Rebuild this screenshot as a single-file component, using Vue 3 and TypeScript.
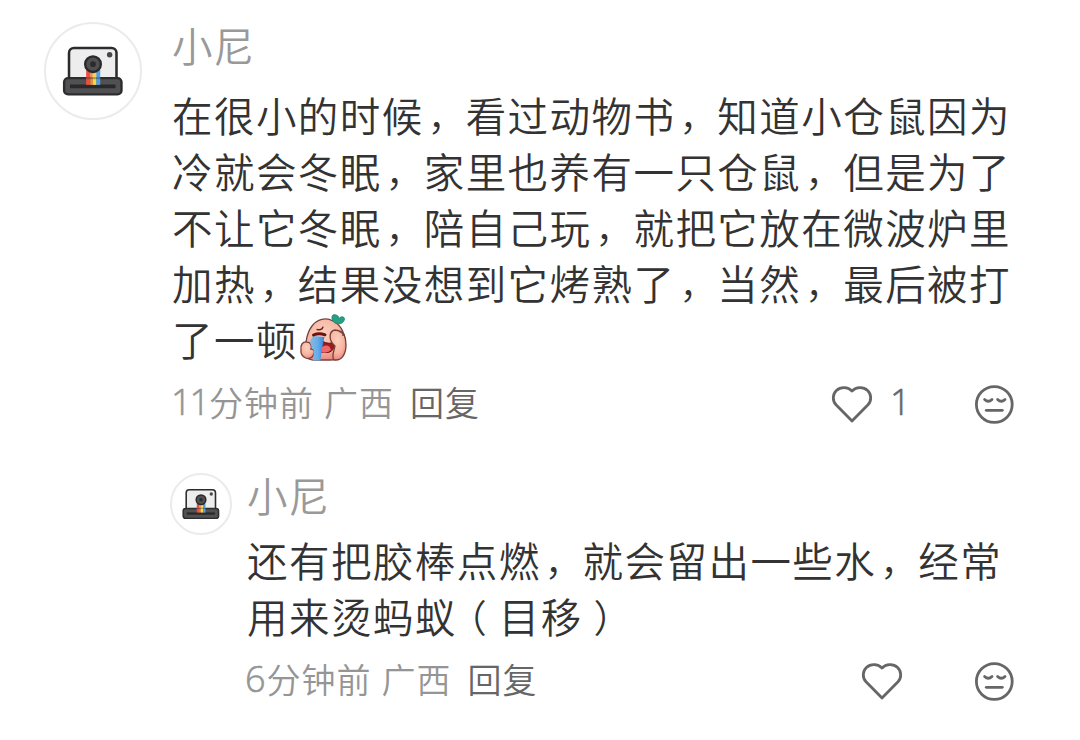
<script setup lang="ts">
interface Comment {
  id: number
  name: string
  lines: string[]
  elapsed: number
  region: string
  likes: number
  crying: boolean
  reply: boolean
}

const comments: Comment[] = [
  {
    id: 1,
    name: '小尼',
    lines: [
      '在很小的时候，看过动物书，知道小仓鼠因为',
      '冷就会冬眠，家里也养有一只仓鼠，但是为了',
      '不让它冬眠，陪自己玩，就把它放在微波炉里',
      '加热，结果没想到它烤熟了，当然，最后被打',
      '了一顿',
    ],
    elapsed: 11,
    region: '广西',
    likes: 1,
    crying: true,
    reply: false,
  },
  {
    id: 2,
    name: '小尼',
    lines: ['还有把胶棒点燃，就会留出一些水，经常', '用来烫蚂蚁（目移）'],
    elapsed: 6,
    region: '广西',
    likes: 0,
    crying: false,
    reply: true,
  },
]

// Punctuation is split out so that it can be placed optically within its cell.
const segments = (line: string): string[] => line.split(/([，（）])/).filter(Boolean)
const kind = (s: string): string => (({ '，': 'comma', '（': 'open', '）': 'close' }) as Record<string, string>)[s] ?? ''
</script>

<template>
  <main class="thread">
    <article v-for="c in comments" :key="c.id" class="comment" :class="{ reply: c.reply }">
      <div class="avatar">
        <svg viewBox="0 0 96 96">
          <rect x="23.500" y="24.500" width="48.500" height="35" rx="5" fill="#ededed" stroke="#2c2c2e" stroke-width="2.600" />
          <rect x="18.500" y="55.300" width="58.600" height="16.500" rx="4" fill="#515153" stroke="#2c2c2e" stroke-width="2.400" />
          <path d="M24.500 63.800H71" stroke="#29292b" stroke-width="3.800" />
          <path d="M43.200 47V62.200" stroke="#e9503f" stroke-width="4.400" />
          <path d="M46.500 47V62.200" stroke="#f08a3c" stroke-width="2.500" />
          <path d="M49.700 47V62.200" stroke="#f8d44b" stroke-width="4" />
          <path d="M53.400 47V62.200" stroke="#4f9fe2" stroke-width="4" />
          <path d="M41 55.300H56" stroke="#2c2c2e" stroke-opacity=".35" stroke-width="2" />
          <circle cx="48" cy="41" r="8" fill="#505052" stroke="#29292b" stroke-width="2.400" />
          <circle cx="48" cy="41" r="2.900" fill="#2b2b2d" />
          <circle cx="65" cy="31.500" r="2.800" fill="#47474a" />
        </svg>
      </div>
      <div class="content">
        <div class="name">{{ c.name }}</div>
        <div class="text">
          <div v-for="(line, i) in c.lines" :key="i" class="line">
            <span v-for="(s, j) in segments(line)" :key="j" :class="kind(s)">{{ s }}</span>
            <svg v-if="c.crying && i === c.lines.length - 1" class="emoji" viewBox="0 0 50 48">
              <defs>
                <radialGradient id="skin" cx=".45" cy=".35" r=".7">
                  <stop offset="0" stop-color="#fbd0bb" />
                  <stop offset=".6" stop-color="#f7b5a3" />
                  <stop offset="1" stop-color="#ea7f77" />
                </radialGradient>
                <linearGradient id="tears" x2="1">
                  <stop offset="0" stop-color="#91b9dd" />
                  <stop offset=".55" stop-color="#63aeea" />
                  <stop offset="1" stop-color="#3981db" />
                </linearGradient>
              </defs>
              <path d="M8 43C5 34 7 20 13 12C18 5 27 3 34 7C43 11 47 22 46 33C45 42 39 46 31 46H14Q10 46 8 43Z" fill="url(#skin)" stroke="#74423c" stroke-width="1.300" />
              <path d="M36 9C33 7 32 3 34 1C37 0 40 2 40 4.500C42 2 45.500 2.500 45.500 5C45 9 41 11 36 9Z" fill="#26a083" stroke="#168268" stroke-width=".8" />
              <path d="M18 15.500Q23 16.500 24 13" fill="none" stroke="#6b241f" stroke-width="1.300" stroke-linecap="round" />
              <path d="M23 27Q30 31 35 28C36 37 31 40 22 38Z" fill="#9a1b1b" stroke="#64130f" />
              <path d="M23 33Q30 29 32 36Q28 40 22 38Z" fill="#ef6769" />
              <path d="M2 36C1 31 4 27 8 28C12 28 13 32 12 35C16 35 17 39 13 43C8 47 1 42 2 36Z" fill="url(#skin)" stroke="#74423c" stroke-width="1.300" />
              <path d="M14 22L25.500 23C23.500 31 22.500 38 21.500 46.500H13.500C14 43 15 41 15 38C15 35 13 35 12.500 34C13 31 11 29 10.500 28Z" fill="url(#tears)" />
              <path d="M14.500 21Q20 18.500 26 20.800" fill="none" stroke="#70100f" stroke-width="3" stroke-linecap="round" />
              <path d="M35 46C32 42 35 38 36 32C29 26 30 17 36 16C42 15 47 22 47 31C47 40 43 46 37 46Z" fill="url(#skin)" />
              <path d="M35 46C32 42 35 38 36 32C29 26 30 17 36 16C39 16 41 17 43 19M45 20Q47 25 47 31C47 40 43 46 37 46H35M41 17Q44 18 44 22" fill="none" stroke="#74423c" stroke-width="1.300" />
            </svg>
          </div>
        </div>
        <div class="meta">
          <span class="digits">{{ c.elapsed }}</span>
          <span class="time">分钟前</span>
          <span class="region">{{ c.region }}</span>
          <span class="answer">回复</span>
          <div class="actions">
            <svg class="heart" viewBox="0 0 44 40">
              <path d="M22 37L6 20.800C2.200 16.700 2.500 10.200 6.400 6.500C10.900 2.300 17.800 2.700 22 7.100C26.200 2.700 33.100 2.300 37.600 6.500C41.500 10.200 41.800 16.700 38 20.800Z" />
            </svg>
            <span v-if="c.likes" class="count">{{ c.likes }}</span>
            <svg class="face" viewBox="0 0 40 40">
              <circle cx="20.300" cy="20.500" r="17.900" />
              <path d="M10.600 15.500Q14.300 19 18 15.500M23.600 15.500Q27.300 19 31 15.500" />
              <path d="M12.300 26.300H28.300" />
            </svg>
          </div>
        </div>
      </div>
    </article>
  </main>
</template>

<style>
body {
  margin: 0;
  background: #fff;
}
</style>

<style scoped>
.thread {
  box-sizing: border-box;
  width: 1080px;
  height: 740px;
  padding: 22px 66px 0 44px;
  overflow: hidden;
  background: #fff;
  font-family: "Noto Sans CJK SC", sans-serif;
}
.comment {
  display: flex;
  gap: 30px;
}
.avatar {
  box-sizing: border-box;
  flex: none;
  width: 98px;
  height: 98px;
  border: 2px solid #ebebeb;
  border-radius: 50%;
}
.avatar svg {
  display: block;
  width: 100%;
  height: 100%;
}
.content {
  flex: 1;
  min-width: 0;
}
.name {
  height: 46px;
  margin-bottom: 19px;
  color: #999;
  font-size: 40.500px;
  font-weight: 350;
  line-height: 46px;
  letter-spacing: 1px;
}
.line {
  display: flex;
  height: 56px;
  color: #333;
  font-size: 40.500px;
  font-weight: 350;
  line-height: 56px;
  letter-spacing: 1.450px;
  white-space: nowrap;
}
.comma {
  box-sizing: border-box;
  width: 41.950px;
  padding-left: 4px;
  font-size: 37px;
}
.open,
.close {
  box-sizing: border-box;
  width: 41.950px;
  padding-left: 11px;
  font-size: 38px;
  font-feature-settings: "halt";
}
.emoji {
  width: 50px;
  height: 48px;
  margin: 3px 0 0 1px;
}
.meta {
  display: flex;
  align-items: center;
  height: 40px;
  margin-top: 15px;
  color: #959595;
  font-size: 34px;
  font-weight: 350;
  line-height: 40px;
  letter-spacing: 1px;
  white-space: nowrap;
}
.digits,
.count {
  font-family: "Open Sans", sans-serif;
  font-size: 36px;
  font-weight: 300;
  -webkit-text-stroke: 0.600px currentColor;
}
.digits {
  margin-left: -1px;
  letter-spacing: -2px;
}
.time {
  margin-left: 1px;
}
.region {
  margin-left: 10px;
}
.answer {
  margin-left: 16px;
  color: #666;
}
.actions {
  display: flex;
  align-items: center;
  margin-left: auto;
}
.actions svg {
  fill: none;
  stroke: #666;
  stroke-width: 2.800;
  stroke-linecap: round;
  stroke-linejoin: round;
}
.heart {
  width: 44px;
  height: 40px;
  margin-top: 3px;
}
.count {
  width: 20px;
  margin-left: 16px;
  color: #666;
}
.face {
  width: 40px;
  height: 40px;
  margin: 3px 0 0 64px;
}
.reply {
  gap: 15px;
  margin: 50px 0 0 126px;
}
.reply .avatar {
  width: 62px;
  height: 62px;
  margin-top: 1px;
}
.reply .name {
  margin-bottom: 14px;
}
.reply .digits {
  margin-left: -2px;
}
.reply .time {
  margin-left: 3px;
}
.reply .face {
  margin-left: 70px;
}
</style>
